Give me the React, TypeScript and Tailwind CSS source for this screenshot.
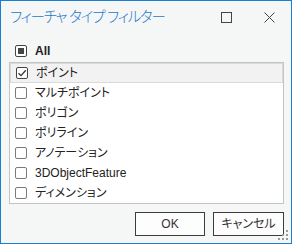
import React from "react";

const ITEMS = [
  { label: "ポイント", checked: true },
  { label: "マルチポイント", checked: false },
  { label: "ポリゴン", checked: false },
  { label: "ポリライン", checked: false },
  { label: "アノテーション", checked: false },
  { label: "3DObjectFeature", checked: false },
  { label: "ディメンション", checked: false },
];

const FONT = "[font-family:'Liberation_Sans','Noto_Sans_CJK_JP',sans-serif] [font-feature-settings:'palt']";

function Box({ state }: { state: "on" | "off" | "mixed" }) {
  return (
    <span
      className={`relative flex h-[12px] w-[12px] shrink-0 items-center justify-center rounded-[2px] border bg-white ${
        state === "off" ? "border-[#7a7a7a]" : "border-[#444]"
      }`}
    >
      {state === "mixed" && <span className="h-[6px] w-[6px] bg-[#444]" />}
      {state === "on" && (
        <svg width="10" height="10" viewBox="0 0 10 10" fill="none">
          <path d="M1.5 5.2 L4 7.6 L8.8 2.2" stroke="#333" strokeWidth="1.3" />
        </svg>
      )}
    </span>
  );
}

export default function App() {
  return (
    <div className={`relative flex h-[244px] w-[292px] flex-col border border-[#1a7fd4] bg-[#f5f6f6] ${FONT}`}>
      {/* title bar */}
      <div className="flex h-[33px] items-center pl-[9px]">
        <span className="flex-1 text-[14.5px] font-light leading-none tracking-[-1.2px] text-[#1f78cc]">フィーチャ タイプ フィルター</span>
        <svg width="11" height="11" viewBox="0 0 11 11" className="mr-[32px]">
          <rect x="0.5" y="0.5" width="10" height="10" fill="none" stroke="#444" />
        </svg>
        <svg width="11" height="11" viewBox="0 0 11 11" className="mr-[16px]">
          <path d="M0.5 0.5 L10.5 10.5 M10.5 0.5 L0.5 10.5" stroke="#444" strokeWidth="1" />
        </svg>
      </div>

      {/* all */}
      <div className="mt-[10px] flex h-[14px] items-center gap-[8px] pl-[14px]">
        <Box state="mixed" />
        <span className="text-[12px] font-bold leading-none text-[#222]">All</span>
      </div>

      {/* list */}
      <div className="ml-[8px] mr-[7px] mt-[4px] flex h-[142px] flex-col border border-[#c4c4c4] bg-white">
        {ITEMS.map((it, i) => (
          <div
            key={it.label}
            className={`flex h-[20px] items-center gap-[8px] pl-[5px] ${
              i === 0 ? "border border-[#dadada] bg-[#f2f2f2] pl-[4px]" : ""
            }`}
          >
            <Box state={it.checked ? "on" : "off"} />
            <span className="text-[12px] leading-none text-[#222]">{it.label}</span>
          </div>
        ))}
      </div>

      {/* buttons */}
      <div className="mr-[7px] mt-[8px] flex justify-end gap-[8px]">
        <button className="h-[24px] w-[70px] border border-[#3c3c3c] bg-[#fdfdfd] text-[12px] text-[#333]">OK</button>
        <button className="h-[24px] w-[71px] border border-[#3c3c3c] bg-[#fdfdfd] text-[12px] text-[#333]">キャンセル</button>
      </div>

      {/* resize grip */}
      <svg width="11" height="11" viewBox="0 0 11 11" className="absolute bottom-[2px] right-[2px]">
        <g fill="#9a9a9a">
          <rect x="8" y="0" width="2" height="2" />
          <rect x="4" y="4" width="2" height="2" />
          <rect x="8" y="4" width="2" height="2" />
          <rect x="0" y="8" width="2" height="2" />
          <rect x="4" y="8" width="2" height="2" />
          <rect x="8" y="8" width="2" height="2" />
        </g>
      </svg>
    </div>
  );
}
